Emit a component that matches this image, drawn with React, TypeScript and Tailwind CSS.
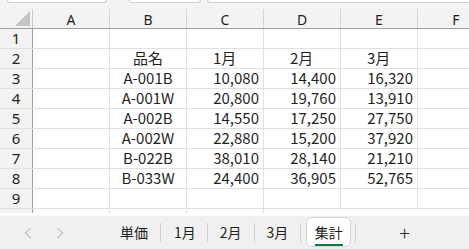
import React from "react";

const cols = ["A", "B", "C", "D", "E", "F"];
type Row = { b?: string; c?: string; d?: string; e?: string; header?: boolean };
const rows: Row[] = [
  {},
  { b: "品名", c: "1月", d: "2月", e: "3月", header: true },
  { b: "A-001B", c: "10,080", d: "14,400", e: "16,320" },
  { b: "A-001W", c: "20,800", d: "19,760", e: "13,910" },
  { b: "A-002B", c: "14,550", d: "17,250", e: "27,750" },
  { b: "A-002W", c: "22,880", d: "15,200", e: "37,920" },
  { b: "B-022B", c: "38,010", d: "28,140", e: "21,210" },
  { b: "B-033W", c: "24,400", d: "36,905", e: "52,765" },
  {},
];

const cellFont = { fontFamily: '"Noto Sans CJK JP", "Noto Sans", sans-serif' };

function NumCell({ v, header }: { v?: string; header?: boolean }) {
  return (
    <div
      className={`w-[77px] shrink-0 h-full border-r border-[#e1e1e1] flex items-center text-[15px] text-[#1f1f1f] ${
        header ? "justify-start pl-[26px]" : "justify-end pr-[4px]"
      }`}
    >
      {v}
    </div>
  );
}

export default function App() {
  return (
    <div className="w-[469px] h-[250px] overflow-hidden bg-[#f3f3f3] flex flex-col" style={cellFont}>
      {/* top strip */}
      <div className="h-[9px] shrink-0 flex items-start">
        <div className="ml-[7px] w-[100px] h-[3px] bg-white border-x border-b border-[#d2d2d2] rounded-b-[4px]" />
        <div className="ml-[22px] w-[72px] h-[3px] bg-white border-x border-b border-[#d2d2d2] rounded-b-[4px]" />
        <div className="ml-[6px] flex-1 h-[3px] bg-white border-l border-b border-[#d2d2d2] rounded-bl-[4px]" />
      </div>
      {/* column headers */}
      <div className="h-[20px] shrink-0 flex border-b border-[#9f9f9f] bg-[#f3f3f3]">
        <div className="w-[33px] shrink-0 h-full border-r border-[#c8c8c8] relative">
          <div
            className="absolute right-[2px] bottom-[2px] w-[15px] h-[15px] bg-[#c6c6c6]"
            style={{ clipPath: "polygon(100% 0, 100% 100%, 0 100%)" }}
          />
        </div>
        {cols.map((c) => (
          <div
            key={c}
            className="w-[77px] shrink-0 h-full border-r border-[#d4d4d4] flex items-center justify-center text-[14px] text-[#1f1f1f] pt-[1px]"
            style={{ fontFamily: '"Noto Sans", sans-serif' }}
          >
            {c}
          </div>
        ))}
      </div>
      {/* rows */}
      <div className="flex-1 bg-white flex flex-col overflow-hidden">
        {rows.map((r, i) => (
          <div key={i} className="h-[20px] shrink-0 flex border-b border-[#e1e1e1]">
            <div
              className="w-[33px] shrink-0 h-full bg-[#f3f3f3] border-r border-[#9f9f9f] flex items-center justify-center text-[15px] text-[#1f1f1f]"
              style={{ fontFamily: '"Noto Sans", sans-serif' }}
            >
              {i + 1}
            </div>
            <div className="w-[77px] shrink-0 h-full border-r border-[#e1e1e1]" />
            <div className="w-[77px] shrink-0 h-full border-r border-[#e1e1e1] flex items-center justify-center text-[15px] text-[#1f1f1f]">
              {r.b}
            </div>
            <NumCell v={r.c} header={r.header} />
            <NumCell v={r.d} header={r.header} />
            <NumCell v={r.e} header={r.header} />
            <div className="w-[77px] shrink-0 h-full" />
          </div>
        ))}
        <div className="h-[4px] shrink-0 flex">
          <div className="w-[33px] shrink-0 h-full bg-[#f3f3f3] border-r border-[#9f9f9f]" />
          <div className="w-[77px] shrink-0 h-full border-r border-[#e1e1e1]" />
          <div className="w-[77px] shrink-0 h-full border-r border-[#e1e1e1]" />
          <div className="w-[77px] shrink-0 h-full border-r border-[#e1e1e1]" />
        </div>
      </div>
      {/* tab bar */}
      <div className="h-[34px] shrink-0 bg-[#f0f0f0] border-b border-[#d6d6d6] flex items-center relative text-[14px] text-[#1f1f1f]">
        <svg className="absolute left-[24px] top-[11px]" width="8" height="12" viewBox="0 0 8 12">
          <path d="M6.5 1 L1.5 6 L6.5 11" fill="none" stroke="#a8a8a8" strokeWidth="1" />
        </svg>
        <svg className="absolute left-[56px] top-[11px]" width="8" height="12" viewBox="0 0 8 12">
          <path d="M1.5 1 L6.5 6 L1.5 11" fill="none" stroke="#a8a8a8" strokeWidth="1" />
        </svg>
        <div className="ml-[120px] flex items-center h-full">
          <span>単価</span>
          <span className="ml-[12px] w-px h-[20px] bg-[#d0d0d0]" />
          <span className="ml-[13px]">1月</span>
          <span className="ml-[11px] w-px h-[20px] bg-[#d0d0d0]" />
          <span className="ml-[12px]">2月</span>
          <span className="ml-[12px] w-px h-[20px] bg-[#d0d0d0]" />
          <span className="ml-[12px]">3月</span>
          <span className="ml-[12px] w-px h-[20px] bg-[#d0d0d0]" />
          <div className="ml-[5px] w-[45px] h-[30px] self-start mt-[1px] bg-white border border-[#d6d6d6] rounded-[6px] flex flex-col items-center pt-[4px]">
            <span className="leading-[20px]">集計</span>
            <span className="w-[28px] h-[2px] bg-[#107c41] mt-[2px]" />
          </div>
          <span className="ml-[4px] w-px h-[20px] bg-[#d0d0d0]" />
          <span className="ml-[43px] text-[20px] font-light leading-none text-[#333]">+</span>
        </div>
      </div>
    </div>
  );
}
